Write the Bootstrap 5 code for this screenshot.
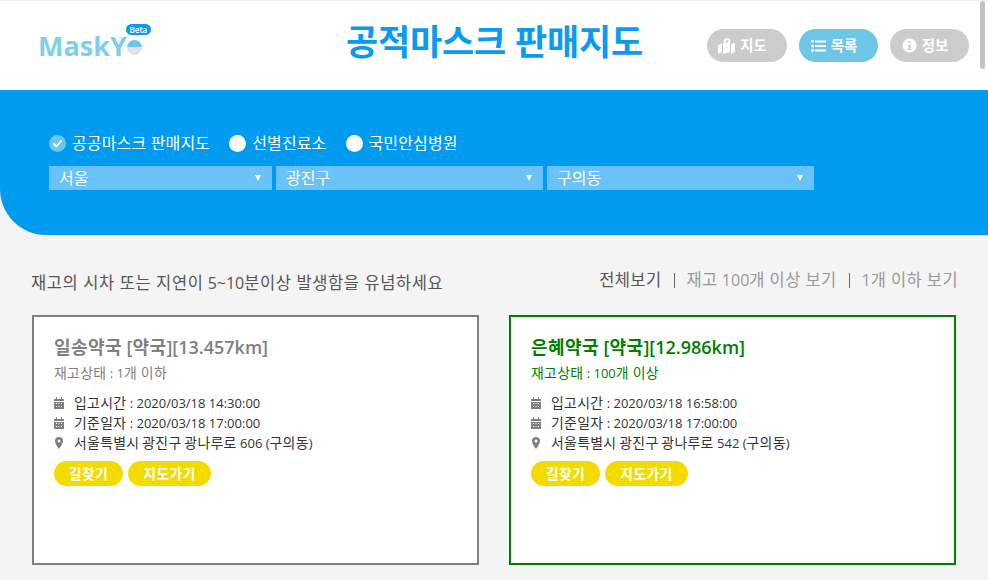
<!DOCTYPE html>
<html lang="ko">
<head>
<meta charset="utf-8">
<title>공적마스크 판매지도</title>
<link href="https://cdn.jsdelivr.net/npm/bootstrap@5.3.0/dist/css/bootstrap.min.css" rel="stylesheet">
<style>
html,body{height:580px;overflow:hidden}
body{background:#f4f4f4;font-family:"Open Sans","Noto Sans CJK KR",sans-serif;color:#333;position:relative}
.hg{font-size:1.07em;letter-spacing:.02em}
.topbar{height:90px;background:#fff;border-top:1px solid #eee;padding:0 19px 0 38px}
.logo-box{width:244px;flex:none;position:relative;padding-top:16px;height:60px}
.logo-word{font-family:"Open Sans",sans-serif;font-weight:700;font-size:27px;line-height:1;color:#7ed0ea;display:flex;align-items:flex-end}
.logo-dot{width:15px;height:15px;border-radius:50%;display:block;background:linear-gradient(#6cc6e8 50%,#e6e0ea 50%);margin-bottom:4px}
.logo-beta{position:absolute;left:88px;top:8px;background:#0a9bf0;color:#fff;font-size:8px;font-weight:600;line-height:11px;padding:0 3.500px;border-radius:6px}
.site-title{flex:1;text-align:center;font-size:35px;font-weight:700;color:#0a9bf0;margin:0 0 8px;line-height:1.2;letter-spacing:-.2px}
.pill-set{gap:12px}
.pill-nav{background:#ccc;color:#fff;font-size:14.500px;font-weight:700;height:33px;width:79px;border-radius:17px;border:0;padding:0 9px 0 0;display:flex;align-items:center;justify-content:center;gap:5px}
.pill-nav.is-wide{width:80px}
.pill-nav.is-on{background:#6dc6e8}
.hero{height:145px;background:#009aef;border-bottom-left-radius:46px;padding:40px 0 0 49px;color:#fff}
.kind-row{height:26px;font-size:16px;gap:19px;margin-bottom:10px;letter-spacing:.15px}
.kind-item{display:flex;align-items:center;gap:6px}
.kind-mark{width:17px;height:17px;border-radius:50%;background:#fff;display:block;flex:none}
.kind-mark.is-on{background:#6dc6e8;display:flex;align-items:center;justify-content:center}
.pick{height:24px;background:#69c3f8;color:#fff;font-size:16px;padding:0 10px;display:flex;align-items:center;justify-content:space-between;line-height:1}
.pick i{border-left:3.500px solid transparent;border-right:3.500px solid transparent;border-top:6px solid #fff;margin-right:1px}
.pick-a{width:223px}.pick-b{width:267px}
.pick-row{gap:4px}
.info-row{padding:33px 30px 0 31px;height:80px}
.info-note{font-size:16px;color:#555;padding-top:3px}
.info-note .hg,.filter-link .hg{font-size:16.500px;letter-spacing:.4px}
.info-note .hg{letter-spacing:.6px}
.filter-link{font-size:16px;color:#999}
.filter-link.is-on{color:#555}
.filter-sep{width:1px;height:15px;background:#666;margin:0 12px}
.store-row{padding:0 32px;gap:30px}
.store{width:447px;height:250px;background:#fff;border:2px solid #808080;padding:17px 20px;color:#808080}
.store.is-green{border-color:#008000;color:#008000}
.store-name{font-size:18px;font-weight:600;line-height:26px;margin:0 0 4px}
.store-name .hg{font-weight:700;font-size:1em;letter-spacing:.4px}
.store-stock{font-size:13px;line-height:18px;margin-bottom:11px}
.store-line{font-size:13px;line-height:20px;color:#333;display:flex;align-items:center;white-space:pre}
.store-line .hg{word-spacing:-1px}
.store-line svg{width:10px;height:12px;margin-right:10px;flex:none}
.go-btn{background:#f3db00;color:#fff;font-size:13px;font-weight:700;height:25px;border:0;border-radius:13px;padding:0;line-height:25px}
.go-a{width:69px}.go-b{width:83px}
.go-row{gap:5px;margin-top:8px}
.fake-thumb{position:absolute;right:3px;top:1px;width:5px;height:68px;background:#c4c4c4;border-radius:3px}
</style>
</head>
<body>
<svg width="0" height="0" class="d-block" aria-hidden="true"><defs>
<symbol id="ic-cal" viewBox="0 0 10 12"><path fill="#808080" d="M2 0h1v2H2zM7 0h1v2H7zM0 2h10v2H0zM0 5h10v7H0z"/><path fill="#fff" d="M2 6h1v1H2zM4.500 6h1v1h-1zM7 6h1v1H7zM2 9h1v1H2zM4.500 9h1v1h-1zM7 9h1v1H7z"/></symbol>
<symbol id="ic-pin" viewBox="0 0 10 12"><path fill="#808080" fill-rule="evenodd" d="M5 0a4 4 0 0 1 4 4c0 2.500-3 6.500-4 8-1-1.500-4-5.500-4-8a4 4 0 0 1 4-4zm0 2.500a1.500 1.500 0 1 0 0 3 1.500 1.500 0 0 0 0-3z"/></symbol>
</defs></svg>
<div class="topbar d-flex align-items-center">
  <div class="logo-box">
    <span class="logo-word">MaskY<span class="logo-dot"></span></span>
    <span class="logo-beta">Beta</span>
  </div>
  <h1 class="site-title">공적마스크 판매지도</h1>
  <div class="pill-set d-flex">
    <button class="pill-nav is-wide"><svg width="17" height="16" viewBox="0 0 17 16"><path fill="#fff" d="M0 7l4-2v9l-4 2zM5 5l2 1 2 4 2-4 1 .5V14l-7 2zM13 6l4-1v9l-4 2z"/><path fill="#fff" fill-rule="evenodd" d="M9 0a3.500 3.500 0 0 1 3.500 3.500C12.500 5.500 10 8 9 9.500 8 8 5.500 5.500 5.500 3.500A3.500 3.500 0 0 1 9 0zm0 2.300a1.200 1.200 0 1 0 0 2.400 1.200 1.200 0 0 0 0-2.400z"/></svg>지도</button>
    <button class="pill-nav is-on"><svg width="15" height="12" viewBox="0 0 15 12"><path fill="#fff" d="M0 0h3v2.500H0zM4 .5h11v2H4zM0 4.700h3v2.500H0zM4 5h11v2H4zM0 9.300h3v2.500H0zM4 9.500h11v2H4z"/></svg>목록</button>
    <button class="pill-nav"><svg width="15" height="15" viewBox="0 0 15 15"><circle cx="7.500" cy="7.500" r="7" fill="#fff"/><path fill="#ccc" d="M6.500 3h2v2h-2zM6 6.500h2.500V11H9.500v1h-4v-1h1V7.500H6z"/></svg>정보</button>
  </div>
</div>
<div class="hero">
  <div class="kind-row d-flex align-items-center">
    <div class="kind-item"><span class="kind-mark is-on"><svg width="11" height="9" viewBox="0 0 11 9"><path d="M1.500 4.500l3 3 5-6" fill="none" stroke="#fff" stroke-width="1.800"/></svg></span>공공마스크 판매지도</div>
    <div class="kind-item"><span class="kind-mark"></span>선별진료소</div>
    <div class="kind-item"><span class="kind-mark"></span>국민안심병원</div>
  </div>
  <div class="pick-row d-flex">
    <div class="pick pick-a"><span>서울</span><i></i></div>
    <div class="pick pick-b"><span>광진구</span><i></i></div>
    <div class="pick pick-b"><span>구의동</span><i></i></div>
  </div>
</div>
<div class="info-row d-flex justify-content-between align-items-start">
  <div class="info-note"><span class="hg">재고의 시차 또는 지연이</span> 5~10<span class="hg">분이상 발생함을 유념하세요</span></div>
  <div class="d-flex align-items-center">
    <span class="filter-link is-on"><span class="hg">전체보기</span></span><span class="filter-sep"></span>
    <span class="filter-link"><span class="hg">재고</span> 100<span class="hg">개 이상 보기</span></span><span class="filter-sep"></span>
    <span class="filter-link">1<span class="hg">개 이하 보기</span></span>
  </div>
</div>
<div class="store-row d-flex">
  <div class="store">
    <h2 class="store-name"><span class="hg">일송약국</span> [<span class="hg">약국</span>][13.457km]</h2>
    <div class="store-stock"><span class="hg">재고상태</span> : 1<span class="hg">개 이하</span></div>
    <div class="store-line"><svg><use href="#ic-cal"/></svg><span class="hg">입고시간</span> : 2020/03/18 14:30:00</div>
    <div class="store-line"><svg><use href="#ic-cal"/></svg><span class="hg">기준일자</span> : 2020/03/18 17:00:00</div>
    <div class="store-line"><svg><use href="#ic-pin"/></svg><span class="hg">서울특별시 광진구 광나루로</span> 606 (<span class="hg">구의동</span>)</div>
    <div class="go-row d-flex"><button class="go-btn go-a"><span class="hg">길찾기</span></button><button class="go-btn go-b"><span class="hg">지도가기</span></button></div>
  </div>
  <div class="store is-green">
    <h2 class="store-name"><span class="hg">은혜약국</span> [<span class="hg">약국</span>][12.986km]</h2>
    <div class="store-stock"><span class="hg">재고상태</span> : 100<span class="hg">개 이상</span></div>
    <div class="store-line"><svg><use href="#ic-cal"/></svg><span class="hg">입고시간</span> : 2020/03/18 16:58:00</div>
    <div class="store-line"><svg><use href="#ic-cal"/></svg><span class="hg">기준일자</span> : 2020/03/18 17:00:00</div>
    <div class="store-line"><svg><use href="#ic-pin"/></svg><span class="hg">서울특별시 광진구 광나루로</span> 542 (<span class="hg">구의동</span>)</div>
    <div class="go-row d-flex"><button class="go-btn go-a"><span class="hg">길찾기</span></button><button class="go-btn go-b"><span class="hg">지도가기</span></button></div>
  </div>
</div>
<div class="fake-thumb"></div>
<script src="https://cdn.jsdelivr.net/npm/bootstrap@5.3.0/dist/js/bootstrap.bundle.min.js"></script>
</body>
</html>
